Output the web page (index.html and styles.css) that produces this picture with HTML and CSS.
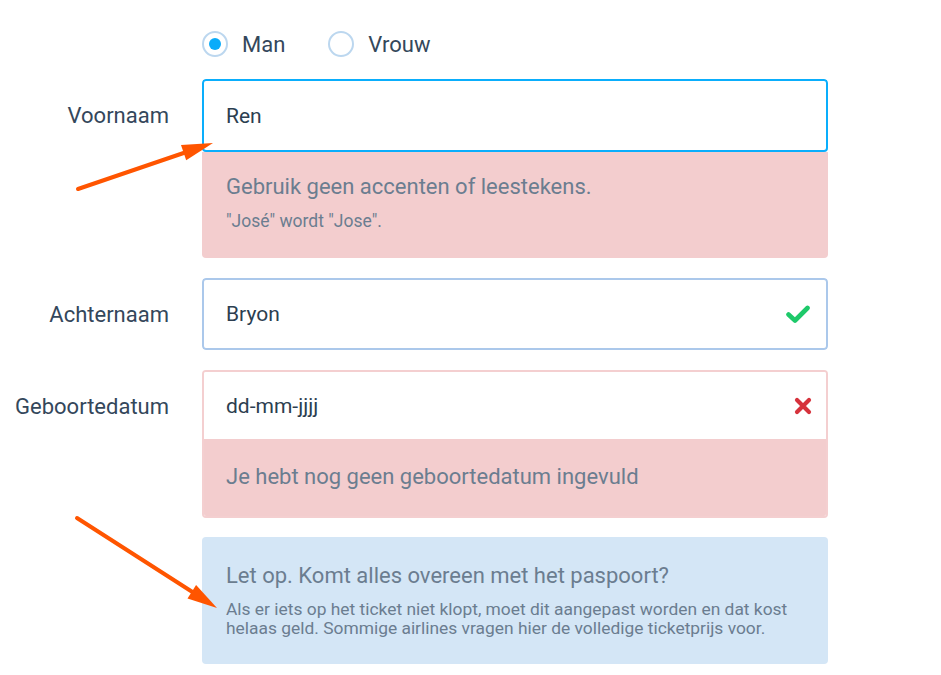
FILE: index.html
```html
<!DOCTYPE html>
<html lang="nl">
<head>
<meta charset="utf-8">
<title>Formulier</title>
<link rel="stylesheet" href="styles.css">
</head>
<body>
<main class="form">
  <div class="radios">
    <label class="radio"><span class="dot checked"></span><span>Man</span></label>
    <label class="radio"><span class="dot"></span><span>Vrouw</span></label>
  </div>

  <div class="row">
    <div class="label">Voornaam</div>
    <div class="field">
      <div class="input focused">Ren</div>
      <div class="msg error">
        <p class="msg-title">Gebruik geen accenten of leestekens.</p>
        <p class="msg-small">"José" wordt "Jose".</p>
      </div>
    </div>
  </div>

  <div class="row">
    <div class="label">Achternaam</div>
    <div class="field">
      <div class="input valid">Bryon
        <svg class="icon" width="24" height="20" viewBox="0 0 24 20"><path d="M2.5 10.5 L9 16.5 L21.5 4" fill="none" stroke="#1ec96a" stroke-width="4.6" stroke-linecap="round" stroke-linejoin="round"/></svg>
      </div>
    </div>
  </div>

  <div class="row">
    <div class="label">Geboortedatum</div>
    <div class="field invalid">
      <div class="input plain">dd-mm-jjjj
        <svg class="icon x" width="18" height="18" viewBox="0 0 18 18"><path d="M3 3 L15 15 M15 3 L3 15" fill="none" stroke="#d6323c" stroke-width="4.2" stroke-linecap="round"/></svg>
      </div>
      <div class="msg error short">
        <p class="msg-title">Je hebt nog geen geboortedatum ingevuld</p>
      </div>
    </div>
  </div>

  <div class="row note">
    <div class="label"></div>
    <div class="info">
      <p class="info-title">Let op. Komt alles overeen met het paspoort?</p>
      <p class="info-body">Als er iets op het ticket niet klopt, moet dit aangepast worden en dat kost helaas geld. Sommige airlines vragen hier de volledige ticketprijs voor.</p>
    </div>
  </div>
</main>

<svg class="arrows" width="941" height="675" viewBox="0 0 941 675">
  <line x1="78" y1="189" x2="188" y2="151.5" stroke="#ff5500" stroke-width="4" stroke-linecap="round"/>
  <polygon points="213,143 186.2,160.3 181,145.1" fill="#ff5500"/>
  <line x1="77" y1="518" x2="194" y2="593" stroke="#ff5500" stroke-width="4" stroke-linecap="round"/>
  <polygon points="217,608 187.5,598.5 196.1,585.1" fill="#ff5500"/>
</svg>
</body>
</html>
```

FILE: styles.css
```css
* { box-sizing: border-box; }

body {
  margin: 0;
  background: #ffffff;
  font-family: Roboto, "Noto Sans", "Liberation Sans", sans-serif;
  color: #2f4154;
}

.form {
  display: flex;
  flex-direction: column;
  gap: 20px;
  padding-top: 31px;
}

.radios {
  display: flex;
  align-items: center;
  gap: 43px;
  margin-left: 202px;
  margin-bottom: 2px;
  height: 26px;
}

.radio {
  display: flex;
  align-items: center;
  gap: 14px;
  font-size: 22px;
  color: #34475b;
}

.dot {
  width: 26px;
  height: 26px;
  border-radius: 50%;
  border: 2px solid #bcd7ef;
  display: flex;
  align-items: center;
  justify-content: center;
}

.dot.checked::after {
  content: "";
  width: 12px;
  height: 12px;
  border-radius: 50%;
  background: #0aacfa;
}

.row {
  display: grid;
  grid-template-columns: 169px 626px;
  column-gap: 33px;
  align-items: start;
}

.row.note {
  margin-top: -1px;
}

.label {
  height: 72px;
  display: flex;
  align-items: center;
  justify-content: flex-end;
  font-size: 22px;
  color: #34475b;
}

.field {
  border-radius: 4px;
  overflow: hidden;
}

.input {
  height: 72px;
  display: flex;
  align-items: center;
  justify-content: space-between;
  padding: 0 16px 0 22px;
  font-size: 21px;
  color: #2c3e50;
  background: #ffffff;
  border-radius: 4px;
}

.input.focused {
  border: 2px solid #0aaefc;
  height: 73px;
}

.input.valid {
  border: 2px solid #abc8eb;
}

.field.invalid {
  border: 2px solid #f4cfd0;
}

.input.plain {
  height: 67px;
  border-radius: 0;
  padding-left: 22px;
  padding-right: 14px;
}

.msg {
  background: #f3cdce;
  color: #6b7d90;
  padding: 22px 24px 27px;
}

.msg p { margin: 0; }

.msg-title {
  font-size: 22px;
  line-height: 26px;
}

.msg-small {
  font-size: 17.5px;
  line-height: 20px;
  margin-top: 11px !important;
}

.msg.short {
  padding: 25px 22px 26px;
}

.info {
  background: #d4e6f6;
  border-radius: 4px;
  padding: 26px 24px 26px;
  color: #6b7d90;
}

.info p { margin: 0; }

.info-title {
  font-size: 22px;
  line-height: 26px;
  margin-bottom: 11px !important;
}

.info-body {
  font-size: 17.4px;
  line-height: 19px;
}

.arrows {
  position: absolute;
  left: 0;
  top: 0;
  pointer-events: none;
}
```
